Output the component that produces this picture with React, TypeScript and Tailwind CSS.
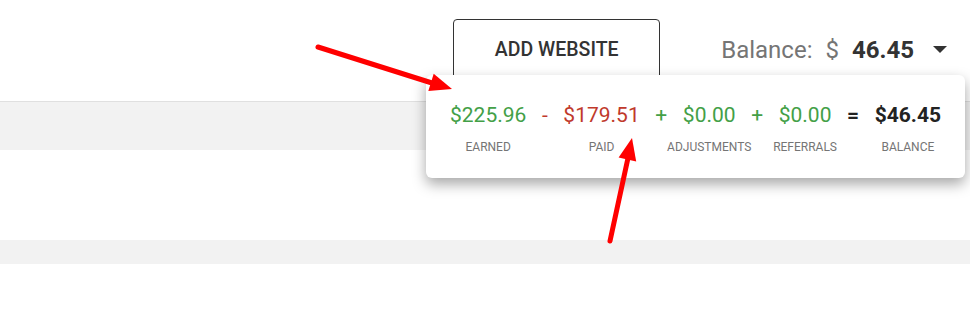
import { FC, ReactNode } from "react";

const font = { fontFamily: "Roboto, 'Liberation Sans', sans-serif" };

// one value with its caption centred below it
const Amount: FC<{ value: string; label: string; color: string; bold?: boolean }> = ({
  value,
  label,
  color,
  bold,
}) => (
  <div className="flex flex-col items-center">
    <div className={`text-[21px] leading-[28px] ${color} ${bold ? "font-bold" : ""}`}>{value}</div>
    <div className="w-0 flex justify-center mt-[10px]">
      <span className="whitespace-nowrap text-[12px] leading-[16px] text-[#757575]">{label}</span>
    </div>
  </div>
);

const Op: FC<{ children: ReactNode; color: string; bold?: boolean }> = ({ children, color, bold }) => (
  <div className={`text-[21px] leading-[28px] ${color} ${bold ? "font-bold" : ""}`}>{children}</div>
);

const BalancePopup: FC = () => (
  <div className="absolute left-[426px] top-[75px] w-[539px] h-[103px] rounded-md bg-white shadow-[0_6px_14px_rgba(0,0,0,0.35)] pt-[26px] pl-[24px]">
    <div className="flex items-start gap-[15.6px]">
      <Amount value="$225.96" label="EARNED" color="text-[#43a047]" />
      <Op color="text-[#c0392b]">-</Op>
      <Amount value="$179.51" label="PAID" color="text-[#c0392b]" />
      <Op color="text-[#43a047]">+</Op>
      <Amount value="$0.00" label="ADJUSTMENTS" color="text-[#43a047]" />
      <Op color="text-[#43a047]">+</Op>
      <Amount value="$0.00" label="REFERRALS" color="text-[#43a047]" />
      <Op color="text-[#222]" bold>
        =
      </Op>
      <Amount value="$46.45" label="BALANCE" color="text-[#222]" bold />
    </div>
  </div>
);

export default function App() {
  return (
    <div className="relative w-[970px] h-[310px] bg-white overflow-hidden" style={font}>
      {/* header */}
      <div className="h-[101px] flex justify-end items-start pt-[19px] pr-[23px]">
        <button className="w-[207px] h-[61px] border border-[#333] rounded-[4px] bg-white text-[19.5px] font-medium text-[#333] flex items-center justify-center">
          ADD WEBSITE
        </button>
        <div className="ml-[61px] h-[61px] flex items-center">
          <span className="text-[24px] text-[#757575]">Balance:</span>
          <span className="ml-[13px] text-[24px] text-[#757575]">$</span>
          <span className="ml-[13px] text-[24px] font-bold text-[#333]">46.45</span>
          <svg className="ml-[19px]" width="14" height="8" viewBox="0 0 14 8">
            <path d="M0 0 L14 0 L7 7 Z" fill="#333" />
          </svg>
        </div>
      </div>

      {/* table rows */}
      <div className="border-t border-[#e0e0e0] h-[49px] bg-[#f2f2f2]" />
      <div className="h-[90px]" />
      <div className="h-[24px] bg-[#f2f2f2]" />

      <BalancePopup />

      {/* annotation arrows */}
      <svg className="absolute inset-0 pointer-events-none" width="970" height="310">
        <line x1="318" y1="47" x2="432" y2="83" stroke="#ff0000" strokeWidth="5" strokeLinecap="round" />
        <polygon points="452,89 428.3,91 433.7,73.8" fill="#ff0000" />
        <line x1="610" y1="241" x2="628" y2="158" stroke="#ff0000" strokeWidth="5" strokeLinecap="round" />
        <polygon points="632,138 636.2,161.4 618.6,157.6" fill="#ff0000" />
      </svg>
    </div>
  );
}
